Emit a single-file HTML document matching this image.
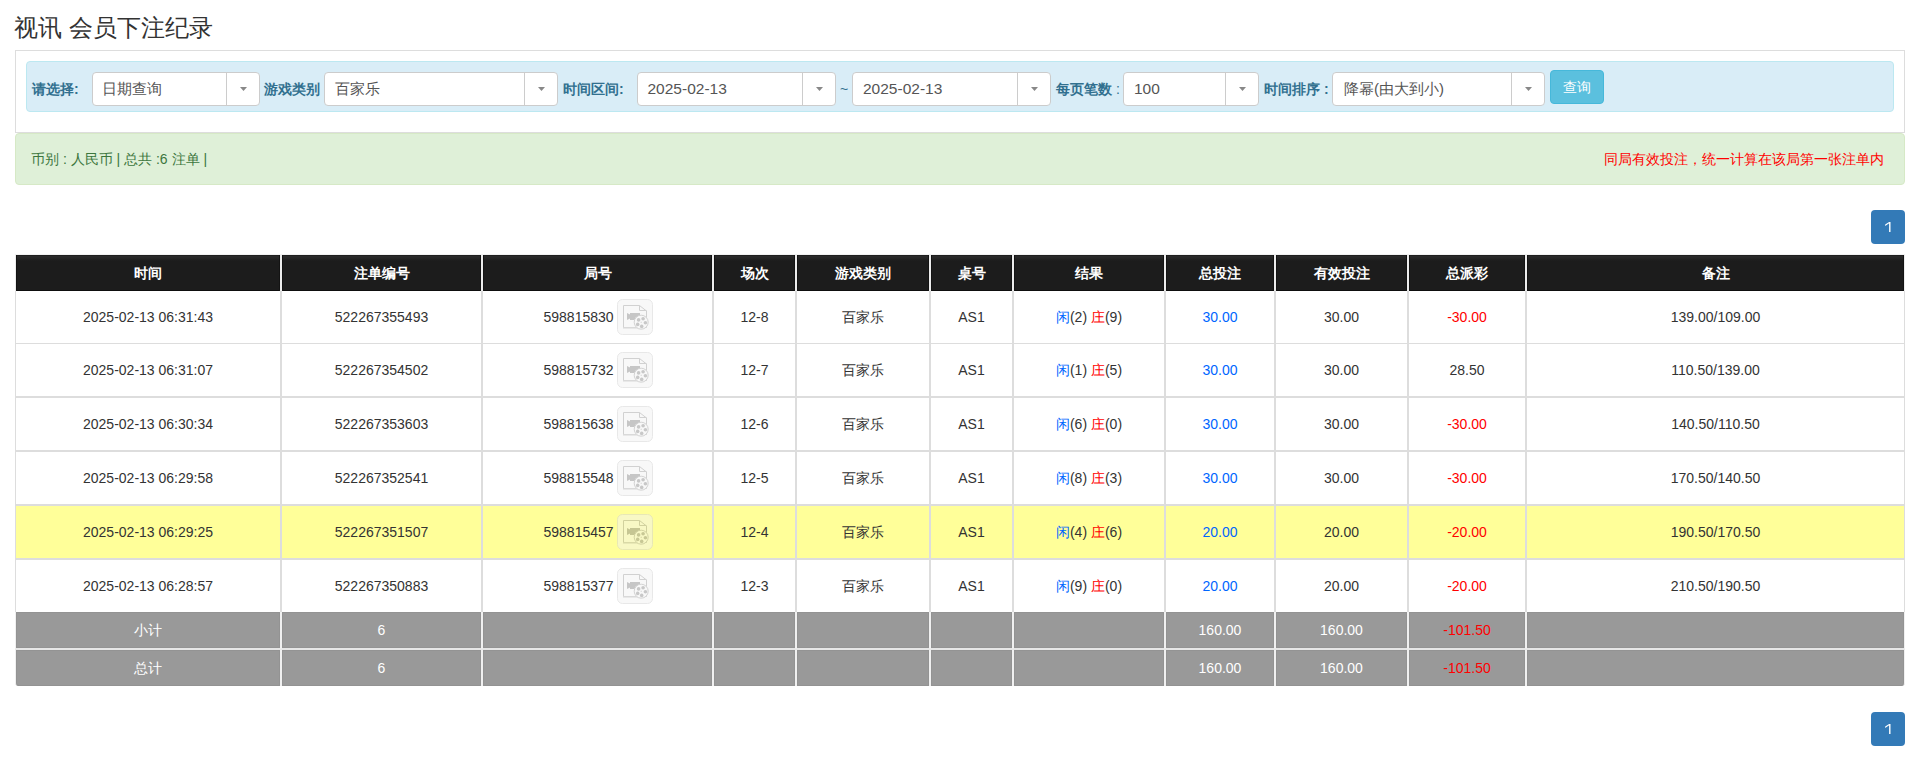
<!DOCTYPE html>
<html><head><meta charset="utf-8">
<style>
*{box-sizing:border-box;margin:0;padding:0}
html,body{width:1919px;height:779px;overflow:hidden;background:#fff}
body{font-family:"Liberation Sans",sans-serif;font-size:14px;color:#333;position:relative}
.abs{position:absolute}
h3{position:absolute;left:14px;top:13px;font-size:24px;font-weight:normal;line-height:30px;color:#333;white-space:nowrap}
.panel{position:absolute;left:15px;top:50px;width:1890px;height:83px;border:1px solid #ddd;background:#fff}
.bar{position:absolute;left:26px;top:61px;width:1868px;height:51px;border:1px solid #bce8f1;background:#d9edf7;border-radius:4px}
.lbl{position:absolute;top:79px;line-height:20px;font-weight:bold;color:#31708f;white-space:nowrap;font-size:14px}
.lbl i{font-style:normal;font-weight:normal}
.sel{position:absolute;top:72px;height:34px;border:1px solid #ccc;border-radius:4px;background:#fff;color:#555;white-space:nowrap}
.sel span{position:absolute;left:10px;top:6px;line-height:20px;font-size:15.5px}
.sel b{position:absolute;top:0;right:0;width:33px;height:32px;border-left:1px solid #ccc}
.sel b:after{content:"";position:absolute;left:13px;top:14px;width:7px;height:4px;background:#888;clip-path:polygon(0 0,100% 0,50% 100%)}
.btn{position:absolute;left:1550px;top:70px;width:54px;height:34px;background:#5bc0de;border:1px solid #46b8da;border-radius:4px;color:#fff;text-align:center;line-height:32px;font-size:14px}
.alert{position:absolute;left:15px;top:133px;width:1890px;height:52px;border:1px solid #d6e9c6;background:#dff0d8;border-radius:4px;color:#3c763d}
.alert .l{position:absolute;left:15px;top:15px;line-height:20px;font-size:14px;white-space:nowrap}
.alert .r{position:absolute;right:20px;top:15px;line-height:20px;font-size:14px;color:#f00;white-space:nowrap}
.pg{position:absolute;left:1871px;width:34px;height:34px;background:#337ab7;border-radius:4px;color:#fff;text-align:center;line-height:34px;font-size:14px}

.t{position:absolute;left:15px;top:255px;width:1890px;border-collapse:separate;border-spacing:0;table-layout:fixed}
.t td,.t th{text-align:center;vertical-align:middle;white-space:nowrap;padding:0;font-size:14px}
.t th{height:36px;background:#1c1c1c;color:#fff;font-weight:bold;border-left:1px solid #ececec;border-right:1px solid #ececec;box-shadow:inset 1px 0 0 #131313,inset -1px 0 0 #131313,inset 0 -1px 0 #0e0e0e,0 -1px 0 #f2f2f2;background-image:linear-gradient(#1f1f1f 0,#1f1f1f 1px,#2b2b2b 1px,#272727 3px,#1c1c1c 6px)}
.t td{border-left:1px solid #ddd;border-right:1px solid #ddd;background:#fff;color:#333}
.t tr.r1 td{height:53px;border-bottom:1px solid #ddd}
.t tr.r2 td{height:54px;border-bottom:2px solid #ddd}
.t tr.r6 td{height:52px}
.t tr.y td{background:#ffff99}
.t tr.f td{background:#999;color:#fff;border-left-color:#f0f0f0;border-right-color:#f0f0f0;box-shadow:inset 0 0 0 1px #939393}
.t tr.f1 td{height:38px;border-bottom:2px solid #e6e6e6}
.t tr.f2 td{height:36px}
.t tr.f2 td:first-child{border-bottom-left-radius:3px}
.t tr.f2 td:last-child{border-bottom-right-radius:3px}
.blue{color:#0066ff}
.red{color:#f00}
.t td.blue{color:#0066ff}
.t td.red,.t tr.f td.red{color:#f00}
.jh{position:relative;top:1px;left:1px}
.t td.c,.t th{padding-top:2px}
.t td.rs{padding-top:2px}
.ic{display:inline-block;width:36px;height:36px;vertical-align:middle;margin-top:-2px;opacity:.5}
</style></head>
<body>
<h3>视讯 会员下注纪录</h3>
<div class="panel"></div>
<div class="bar"></div>
<div class="lbl" style="left:32px">请选择:</div>
<div class="sel" style="left:92px;width:168px"><span style="font-size:15px;left:9px">日期查询</span><b></b></div>
<div class="lbl" style="left:264px">游戏类别</div>
<div class="sel" style="left:324px;width:234px"><span style="font-size:15px">百家乐</span><b></b></div>
<div class="lbl" style="left:563px">时间区间:</div>
<div class="sel" style="left:637px;width:199px"><span style="left:9.5px">2025-02-13</span><b></b></div>
<div class="lbl" style="left:840px;font-weight:normal">~</div>
<div class="sel" style="left:852px;width:199px"><span>2025-02-13</span><b></b></div>
<div class="lbl" style="left:1056px">每页笔数 <i>:</i></div>
<div class="sel" style="left:1123px;width:136px"><span>100</span><b></b></div>
<div class="lbl" style="left:1264px">时间排序 :</div>
<div class="sel" style="left:1332px;width:213px"><span style="font-size:15px;left:11px">降幂(由大到小)</span><b></b></div>
<div class="btn">查询</div>
<div class="alert"><div class="l">币别 : 人民币 | 总共 :6 注单 |</div><div class="r">同局有效投注，统一计算在该局第一张注单内</div></div>
<div class="pg" style="top:210px"><svg width="34" height="34" style="display:block"><path d="M18.1 12H19.5V22H18.1Z M18.1 12L19.2 12.6 14.2 16.1V14.6Z" fill="#fff"/></svg></div>
<svg width="0" height="0" style="position:absolute"><defs><symbol id="vid" viewBox="0 0 36 36">
<rect x="0.5" y="0.5" width="35" height="35" rx="5" fill="#f2f2f2" stroke="#d2d2d2"/>
<path d="M6.5 6.5H22.5L29.5 12V28.5H6.5Z" fill="none" stroke="#a4a4a4" stroke-width="1"/>
<path d="M22.5 6.5V11.5H29.5" fill="none" stroke="#a4a4a4" stroke-width="1"/>
<rect x="6" y="28" width="18" height="1.5" fill="#b4b4b4"/>
<path d="M10 14L13 15.5V19.5L10 21Z" fill="#8f8f8f"/>
<path d="M13 14H23V21H13Z" fill="#8f8f8f"/>
<circle cx="24.2" cy="23.2" r="7" fill="#f2f2f2" stroke="#a8a8a8" stroke-width="1"/>
<g fill="#939393"><circle cx="21.6" cy="20.9" r="1.8"/><circle cx="26.1" cy="19.8" r="1.8"/><circle cx="28.4" cy="23.8" r="1.8"/><circle cx="24.7" cy="27.4" r="1.8"/><circle cx="20.7" cy="25.4" r="1.8"/><rect x="23.6" y="22.8" width="1.2" height="0.8"/></g>
</symbol></defs></svg>
<table class="t">
<colgroup><col style="width:266px"><col style="width:201px"><col style="width:231px"><col style="width:83px"><col style="width:134px"><col style="width:83px"><col style="width:152px"><col style="width:110px"><col style="width:133px"><col style="width:118px"><col style="width:379px"></colgroup>
<tr class="h"><th>时间</th><th>注单编号</th><th>局号</th><th>场次</th><th>游戏类别</th><th>桌号</th><th>结果</th><th>总投注</th><th>有效投注</th><th>总派彩</th><th>备注</th></tr>
<tr class="r1"><td>2025-02-13 06:31:43</td><td>522267355493</td><td><span class="jh">598815830 <svg class="ic"><use href="#vid"/></svg></span></td><td>12-8</td><td class="c">百家乐</td><td>AS1</td><td class="rs"><span class="blue">闲</span>(2) <span class="red">庄</span>(9)</td><td class="blue">30.00</td><td>30.00</td><td><span class="red">-30.00</span></td><td>139.00/109.00</td></tr>
<tr class="r2"><td>2025-02-13 06:31:07</td><td>522267354502</td><td><span class="jh">598815732 <svg class="ic"><use href="#vid"/></svg></span></td><td>12-7</td><td class="c">百家乐</td><td>AS1</td><td class="rs"><span class="blue">闲</span>(1) <span class="red">庄</span>(5)</td><td class="blue">30.00</td><td>30.00</td><td>28.50</td><td>110.50/139.00</td></tr>
<tr class="r2"><td>2025-02-13 06:30:34</td><td>522267353603</td><td><span class="jh">598815638 <svg class="ic"><use href="#vid"/></svg></span></td><td>12-6</td><td class="c">百家乐</td><td>AS1</td><td class="rs"><span class="blue">闲</span>(6) <span class="red">庄</span>(0)</td><td class="blue">30.00</td><td>30.00</td><td><span class="red">-30.00</span></td><td>140.50/110.50</td></tr>
<tr class="r2"><td>2025-02-13 06:29:58</td><td>522267352541</td><td><span class="jh">598815548 <svg class="ic"><use href="#vid"/></svg></span></td><td>12-5</td><td class="c">百家乐</td><td>AS1</td><td class="rs"><span class="blue">闲</span>(8) <span class="red">庄</span>(3)</td><td class="blue">30.00</td><td>30.00</td><td><span class="red">-30.00</span></td><td>170.50/140.50</td></tr>
<tr class="r2 y"><td>2025-02-13 06:29:25</td><td>522267351507</td><td><span class="jh">598815457 <svg class="ic"><use href="#vid"/></svg></span></td><td>12-4</td><td class="c">百家乐</td><td>AS1</td><td class="rs"><span class="blue">闲</span>(4) <span class="red">庄</span>(6)</td><td class="blue">20.00</td><td>20.00</td><td><span class="red">-20.00</span></td><td>190.50/170.50</td></tr>
<tr class="r6"><td>2025-02-13 06:28:57</td><td>522267350883</td><td><span class="jh">598815377 <svg class="ic"><use href="#vid"/></svg></span></td><td>12-3</td><td class="c">百家乐</td><td>AS1</td><td class="rs"><span class="blue">闲</span>(9) <span class="red">庄</span>(0)</td><td class="blue">20.00</td><td>20.00</td><td><span class="red">-20.00</span></td><td>210.50/190.50</td></tr>
<tr class="f f1"><td class="c">小计</td><td>6</td><td></td><td></td><td></td><td></td><td></td><td>160.00</td><td>160.00</td><td class="red">-101.50</td><td></td></tr>
<tr class="f f2"><td class="c">总计</td><td>6</td><td></td><td></td><td></td><td></td><td></td><td>160.00</td><td>160.00</td><td class="red">-101.50</td><td></td></tr>
</table>
<div class="pg" style="top:712px"><svg width="34" height="34" style="display:block"><path d="M18.1 12H19.5V22H18.1Z M18.1 12L19.2 12.6 14.2 16.1V14.6Z" fill="#fff"/></svg></div>
</body></html>
